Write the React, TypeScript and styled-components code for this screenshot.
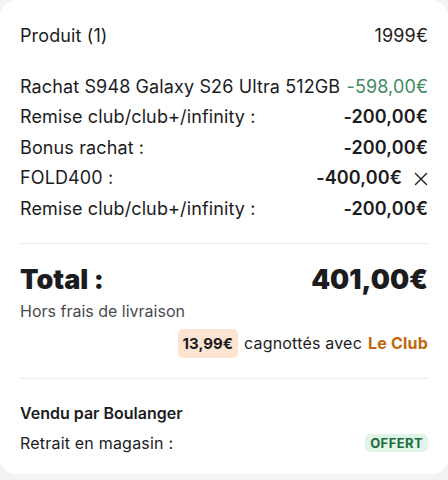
import React from 'react';
import styled, {createGlobalStyle} from 'styled-components';

const GlobalStyle = createGlobalStyle`
  html, body {
    margin: 0;
    padding: 0;
    background: #f3f3f5;
  }
  body {
    font-family: Inter, "Open Sans", sans-serif;
    color: #1c1c1e;
  }
`;

const Card = styled.div`
  background: #fff;
  border-radius: 16px;
  width: 448px;
  height: 474px;
  box-sizing: border-box;
  padding: 21px 20px 0;
`;

const Row = styled.div<{$gap?: number}>`
  display: flex;
  align-items: center;
  justify-content: space-between;
  gap: 5px;
  font-size: 18px;
  letter-spacing: 0.12px;
  line-height: 30.6px;
  margin-top: ${p => p.$gap ?? 0}px;
`;

const Label = styled.span`
  font-weight: 400;
  white-space: nowrap;
`;

const Amount = styled.span<{$tone?: 'green' | 'plain' | 'bold'}>`
  white-space: nowrap;
  font-weight: ${p => (p.$tone === 'bold' ? 600 : 400)};
  color: ${p => (p.$tone === 'green' ? '#3f8a62' : '#1c1c1e')};
`;

const Remove = styled.button`
  border: 0;
  background: none;
  padding: 0;
  margin-left: 12px;
  display: inline-flex;
  cursor: pointer;
  color: #1c1c1e;
`;

const ValueGroup = styled.span`
  display: inline-flex;
  align-items: center;
`;

const Divider = styled.hr<{$top: number}>`
  border: 0;
  height: 1px;
  background: #ececee;
  margin: ${p => p.$top}px 0 0;
`;

const TotalRow = styled.div`
  display: flex;
  justify-content: space-between;
  align-items: center;
  margin-top: 19px;
  font-size: 27px;
  font-weight: 900;
  line-height: 34px;
`;

const Note = styled.div`
  font-size: 16px;
  color: #4a4a4f;
  margin-top: 4px;
  line-height: 20px;
`;

const Cashback = styled.div`
  display: flex;
  justify-content: flex-end;
  align-items: center;
  gap: 6px;
  margin-top: 8px;
  font-size: 16px;
  letter-spacing: 0.2px;
`;

const Pill = styled.span<{$kind: 'peach' | 'mint'}>`
  display: inline-block;
  border-radius: 5px;
  font-weight: 700;
  background: ${p => (p.$kind === 'peach' ? '#fde4d2' : '#e0f5e7')};
  color: ${p => (p.$kind === 'peach' ? '#1c1c1e' : '#1e6a40')};
  font-size: ${p => (p.$kind === 'peach' ? 15 : 13)}px;
  line-height: ${p => (p.$kind === 'peach' ? 17 : 16)}px;
  padding: ${p => (p.$kind === 'peach' ? '6px 5px' : '1px 5px')};
  letter-spacing: ${p => (p.$kind === 'mint' ? '0.4px' : '0')};
`;

const ClubLink = styled.span`
  color: #c0680e;
  font-weight: 700;
`;

const Seller = styled.div`
  font-size: 16px;
  font-weight: 600;
  margin-top: 24px;
  line-height: 20px;
`;

const InfoRow = styled.div`
  display: flex;
  justify-content: space-between;
  align-items: center;
  font-size: 16px;
  letter-spacing: 0.2px;
  margin-top: 10px;
`;

const discounts = [
  {label: 'Remise club/club+/infinity :', value: '-200,00€'},
  {label: 'Bonus rachat :', value: '-200,00€'},
  {label: 'FOLD400 :', value: '-400,00€', removable: true},
  {label: 'Remise club/club+/infinity :', value: '-200,00€'},
];

const CloseIcon = () => (
  <svg width="14" height="14" viewBox="0 0 14 14" fill="none">
    <path d="M1.5 1.5l11 11M12.5 1.5l-11 11" stroke="currentColor" strokeWidth="1.4" strokeLinecap="round" />
  </svg>
);

export default function App() {
  return (
    <>
      <GlobalStyle />
      <Card>
        <Row>
          <Label>Produit (1)</Label>
          <Amount>1999€</Amount>
        </Row>
        <Row $gap={20}>
          <Label>Rachat S948 Galaxy S26 Ultra 512GB</Label>
          <Amount $tone="green">-598,00€</Amount>
        </Row>
        {discounts.map((d, i) => (
          <Row key={i}>
            <Label>{d.label}</Label>
            <ValueGroup>
              <Amount $tone="bold">{d.value}</Amount>
              {d.removable && (
                <Remove aria-label="Retirer">
                  <CloseIcon />
                </Remove>
              )}
            </ValueGroup>
          </Row>
        ))}
        <Divider $top={18} />
        <TotalRow>
          <span>Total :</span>
          <span>401,00€</span>
        </TotalRow>
        <Note>Hors frais de livraison</Note>
        <Cashback>
          <Pill $kind="peach">13,99€</Pill>
          <span>cagnottés avec</span>
          <ClubLink>Le Club</ClubLink>
        </Cashback>
        <Divider $top={20} />
        <Seller>Vendu par Boulanger</Seller>
        <InfoRow>
          <span>Retrait en magasin :</span>
          <Pill $kind="mint">OFFERT</Pill>
        </InfoRow>
      </Card>
    </>
  );
}
